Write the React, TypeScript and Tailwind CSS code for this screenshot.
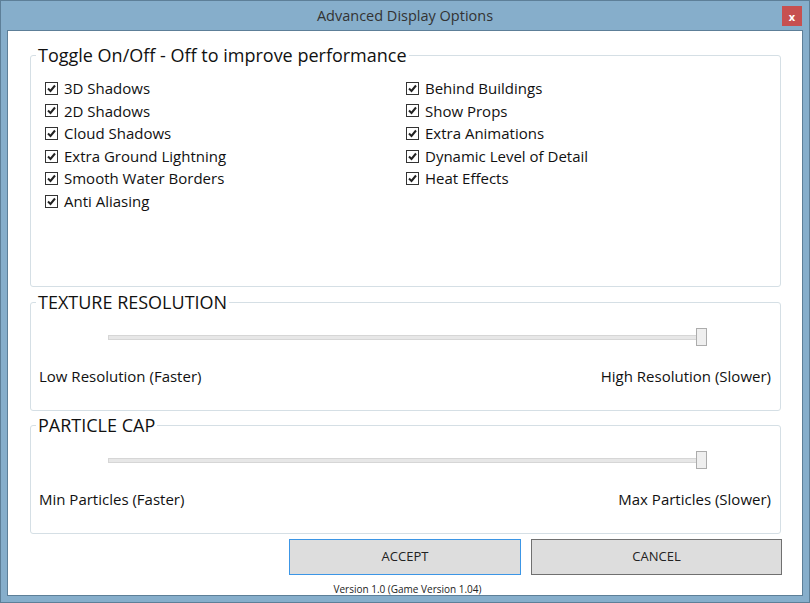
import React from "react";

const font = { fontFamily: '"Open Sans", "Noto Sans", sans-serif' };

const leftOptions = [
  "3D Shadows",
  "2D Shadows",
  "Cloud Shadows",
  "Extra Ground Lightning",
  "Smooth Water Borders",
  "Anti Aliasing",
];

const rightOptions = [
  "Behind Buildings",
  "Show Props",
  "Extra Animations",
  "Dynamic Level of Detail",
  "Heat Effects",
];

function Check({ label }: { label: string }) {
  return (
    <div className="flex h-[22.6px] items-center">
      <span className="flex h-[13px] w-[13px] items-center justify-center border border-[#333] bg-white">
        <svg width="9" height="9" viewBox="0 0 9 9">
          <path d="M1 4.5 L3.5 7 L8 1.5" fill="none" stroke="#222" strokeWidth="2" />
        </svg>
      </span>
      <span className="ml-[6px] text-[15px] text-[#111]">{label}</span>
    </div>
  );
}

function SliderGroup({ title, low, high }: { title: string; low: string; high: string }) {
  return (
    <fieldset className="h-[121px] rounded-[3px] border border-[#d5dfe5]">
      <legend className="ml-[5px] px-[2px] text-[18px] leading-[24px] text-[#111]">{title}</legend>
      {/* slider */}
      <div className="ml-[77px] mr-[73px] mt-[14px] flex h-[18px] items-center">
        <div className="h-[5px] flex-1 border border-[#d6d6d6] bg-[#e7e7e7]" />
        <div className="-ml-[5px] h-[18px] w-[11px] border border-[#acacac] bg-[#efefef]" />
      </div>
      <div className="mt-[20px] flex justify-between pl-[8px] pr-[9px] text-[15px] leading-[20px] text-[#111]">
        <span>{low}</span>
        <span>{high}</span>
      </div>
    </fieldset>
  );
}

export default function App() {
  return (
    <div
      style={font}
      className="flex h-[603px] w-[810px] flex-col border border-[#5d7f98] bg-[#86aecb]"
    >
      {/* Title bar */}
      <div className="relative flex h-[29px] items-center justify-center">
        <span className="text-[14.5px] text-[#333]">Advanced Display Options</span>
        <div className="absolute right-[7px] top-[5px] flex h-[20px] w-[20px] items-center justify-center bg-[#c75050] text-[11px] font-bold leading-none text-white">
          x
        </div>
      </div>

      {/* Client area */}
      <div className="mx-[6px] flex h-[566px] flex-col border border-[#5d7f98] bg-white pl-[22px] pr-[20px] pt-[12px]">
        <fieldset className="mr-[1px] h-[244px] rounded-[3px] border border-[#d5dfe5]">
          <legend className="ml-[5px] px-[2px] text-[18px] leading-[24px] text-[#111]">
            Toggle On/Off - Off to improve performance
          </legend>
          <div className="mt-[10px] flex pl-[14px]">
            <div className="w-[361px]">
              {leftOptions.map((o) => (
                <Check key={o} label={o} />
              ))}
            </div>
            <div>
              {rightOptions.map((o) => (
                <Check key={o} label={o} />
              ))}
            </div>
          </div>
        </fieldset>

        <div className="mr-[1px] mt-[3px]">
          <SliderGroup title="TEXTURE RESOLUTION" low="Low Resolution (Faster)" high="High Resolution (Slower)" />
        </div>
        <div className="mr-[1px] mt-[2px]">
          <SliderGroup title="PARTICLE CAP" low="Min Particles (Faster)" high="Max Particles (Slower)" />
        </div>

        <div className="mt-[5px] flex justify-end gap-[10px]">
          <button className="h-[36px] w-[232px] border border-[#3c96e6] bg-[#dddddd] text-[13px] text-[#222]">
            ACCEPT
          </button>
          <button className="h-[36px] w-[251px] border border-[#707070] bg-[#dddddd] text-[13px] text-[#222]">
            CANCEL
          </button>
        </div>
        <div className="mt-[8px] pl-[3px] text-center text-[10px] leading-[12px] text-[#222]">
          Version 1.0 (Game Version 1.04)
        </div>
      </div>
    </div>
  );
}
